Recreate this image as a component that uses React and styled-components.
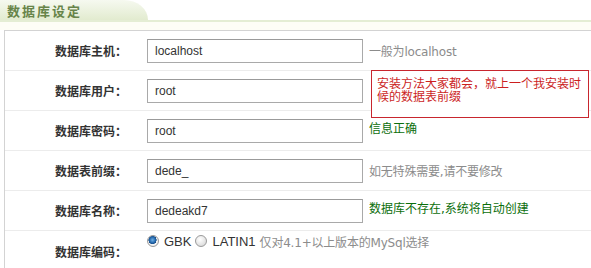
import React from 'react'
import styled, { createGlobalStyle } from 'styled-components'

const GlobalStyle = createGlobalStyle`
    html, body {
        margin: 0;
        padding: 0;
        background: #ffffff;
    }
    body {
        font-family: "Liberation Sans", "Noto Sans CJK SC", sans-serif;
        font-size: 12px;
        color: #333333;
    }
`

const rows = [
    { label: '数据库主机：', value: 'localhost', hint: '一般为localhost', tone: 'muted' },
    { label: '数据库用户：', value: 'root', note: '安装方法大家都会，就上一个我安装时候的数据表前缀' },
    { label: '数据库密码：', value: 'root', hint: '信息正确', tone: 'ok' },
    { label: '数据表前缀：', value: 'dede_', hint: '如无特殊需要,请不要修改', tone: 'muted' },
    { label: '数据库名称：', value: 'dedeakd7', hint: '数据库不存在,系统将自动创建', tone: 'ok' },
]

function DatabaseSettings() {
    return (
        <Page>
            <GlobalStyle />
            <Header>
                <Tab>
                    <Title>数据库设定</Title>
                </Tab>
            </Header>
            <Band />
            <Panel>
                {rows.map(row => (
                    <Row key={row.label}>
                        <Label>{row.label}</Label>
                        <Field defaultValue={row.value} />
                        <HintCell>
                            {row.hint && <Hint $tone={row.tone}>{row.hint}</Hint>}
                            {row.note && <Note>{row.note}</Note>}
                        </HintCell>
                    </Row>
                ))}
                <Row $last>
                    <Label>数据库编码：</Label>
                    <Choices>
                        <Radio type="radio" name="charset" defaultChecked />
                        <ChoiceText>GBK</ChoiceText>
                        <Radio type="radio" name="charset" />
                        <ChoiceText>LATIN1</ChoiceText>
                        <Hint $tone="muted">仅对4.1+以上版本的MySql选择</Hint>
                    </Choices>
                </Row>
            </Panel>
        </Page>
    )
}

const Page = styled.div`
    width: 591px;
    height: 268px;
    overflow: hidden;
`

const Header = styled.div`
    height: 20px;
    display: flex;
`

const Tab = styled.div`
    width: 148px;
    height: 20px;
    background: linear-gradient(to bottom, #f6f9f0 0%, #e2ebcf 100%);
    border-top-right-radius: 24px 20px;
    display: flex;
    align-items: flex-end;
    padding-left: 7px;
    box-sizing: border-box;
`

const Title = styled.h3`
    margin: 0 0 1px 0;
    font-family: "Noto Sans CJK SC", sans-serif;
    font-size: 13px;
    line-height: 16px;
    font-weight: 700;
    letter-spacing: 2px;
    color: #678449;
`

const Band = styled.div`
    height: 8px;
    border-top: 2px solid #e4edd4;
    background: #fdfdf6;
`

const Panel = styled.div`
    margin-left: 4px;
    border-top: 1px solid #d3d3d3;
    border-left: 1px solid #d3d3d3;
`

const Row = styled.div`
    display: grid;
    grid-template-columns: 142px 216px 1fr;
    align-items: center;
    height: ${props => (props.$last ? '40px' : '39px')};
    border-bottom: ${props => (props.$last ? 'none' : '1px solid #ececec')};
`

const Label = styled.div`
    text-align: right;
    padding-right: 20px;
    font-family: "Noto Sans CJK SC", sans-serif;
    font-size: 12px;
    font-weight: 700;
    color: #333333;
`

const Field = styled.input`
    box-sizing: border-box;
    width: 216px;
    height: 24px;
    border: 1px solid #a9a9a9;
    border-top-color: #9a9a9a;
    padding: 0 0 0 7px;
    margin: 0;
    font-family: "Liberation Sans", "Noto Sans CJK SC", sans-serif;
    font-size: 12px;
    color: #333333;
    background: #ffffff;
    outline: none;
`

const HintCell = styled.div`
    position: relative;
    height: 100%;
    display: flex;
    align-items: center;
    padding-left: 6px;
`

const toneColor = {
    muted: '#8c8c8c',
    ok: '#0b6e0b',
}

const Hint = styled.span`
    font-family: "DejaVu Sans", "Noto Sans CJK SC", sans-serif;
    font-size: 12px;
    color: ${props => toneColor[props.$tone]};
    margin-bottom: ${props => (props.$tone === 'ok' ? '6px' : '0')};
    letter-spacing: ${props => (props.$tone === 'ok' ? '0' : '-0.2px')};
    white-space: nowrap;
`

const Note = styled.div`
    position: absolute;
    top: -1px;
    left: 8px;
    width: 218px;
    height: 48px;
    box-sizing: border-box;
    border: 1px solid #c8262e;
    background: #ffffff;
    padding: 5px 4px 0 5px;
    font-family: "Noto Sans CJK SC", sans-serif;
    font-size: 12px;
    line-height: 13px;
    color: #cc1f1f;
    z-index: 2;
`

const Choices = styled.div`
    grid-column: 2 / 4;
    align-self: start;
    margin-top: 3px;
    display: flex;
    align-items: center;
    gap: 4px;
    height: 14px;
`

const Radio = styled.input`
    appearance: none;
    margin: 0;
    width: 12px;
    height: 12px;
    border-radius: 50%;
    border: 1px solid #9a9a9a;
    background: radial-gradient(circle at 40% 35%, #ffffff 0%, #e4e4e4 60%, #cfcfcf 100%);
    box-sizing: border-box;
    position: relative;
    &:checked {
        background:
            radial-gradient(circle at 45% 40%, #6fb0e6 0%, #1f63a8 38%, #1a4f8a 48%, transparent 52%),
            radial-gradient(circle, #f4f4f4 60%, #cfcfcf 100%);
    }
`

const ChoiceText = styled.span`
    font-family: "Liberation Sans", sans-serif;
    font-size: 13px;
    color: #333333;
    margin-left: 1px;
`

export default function App() {
    return <DatabaseSettings />
}
